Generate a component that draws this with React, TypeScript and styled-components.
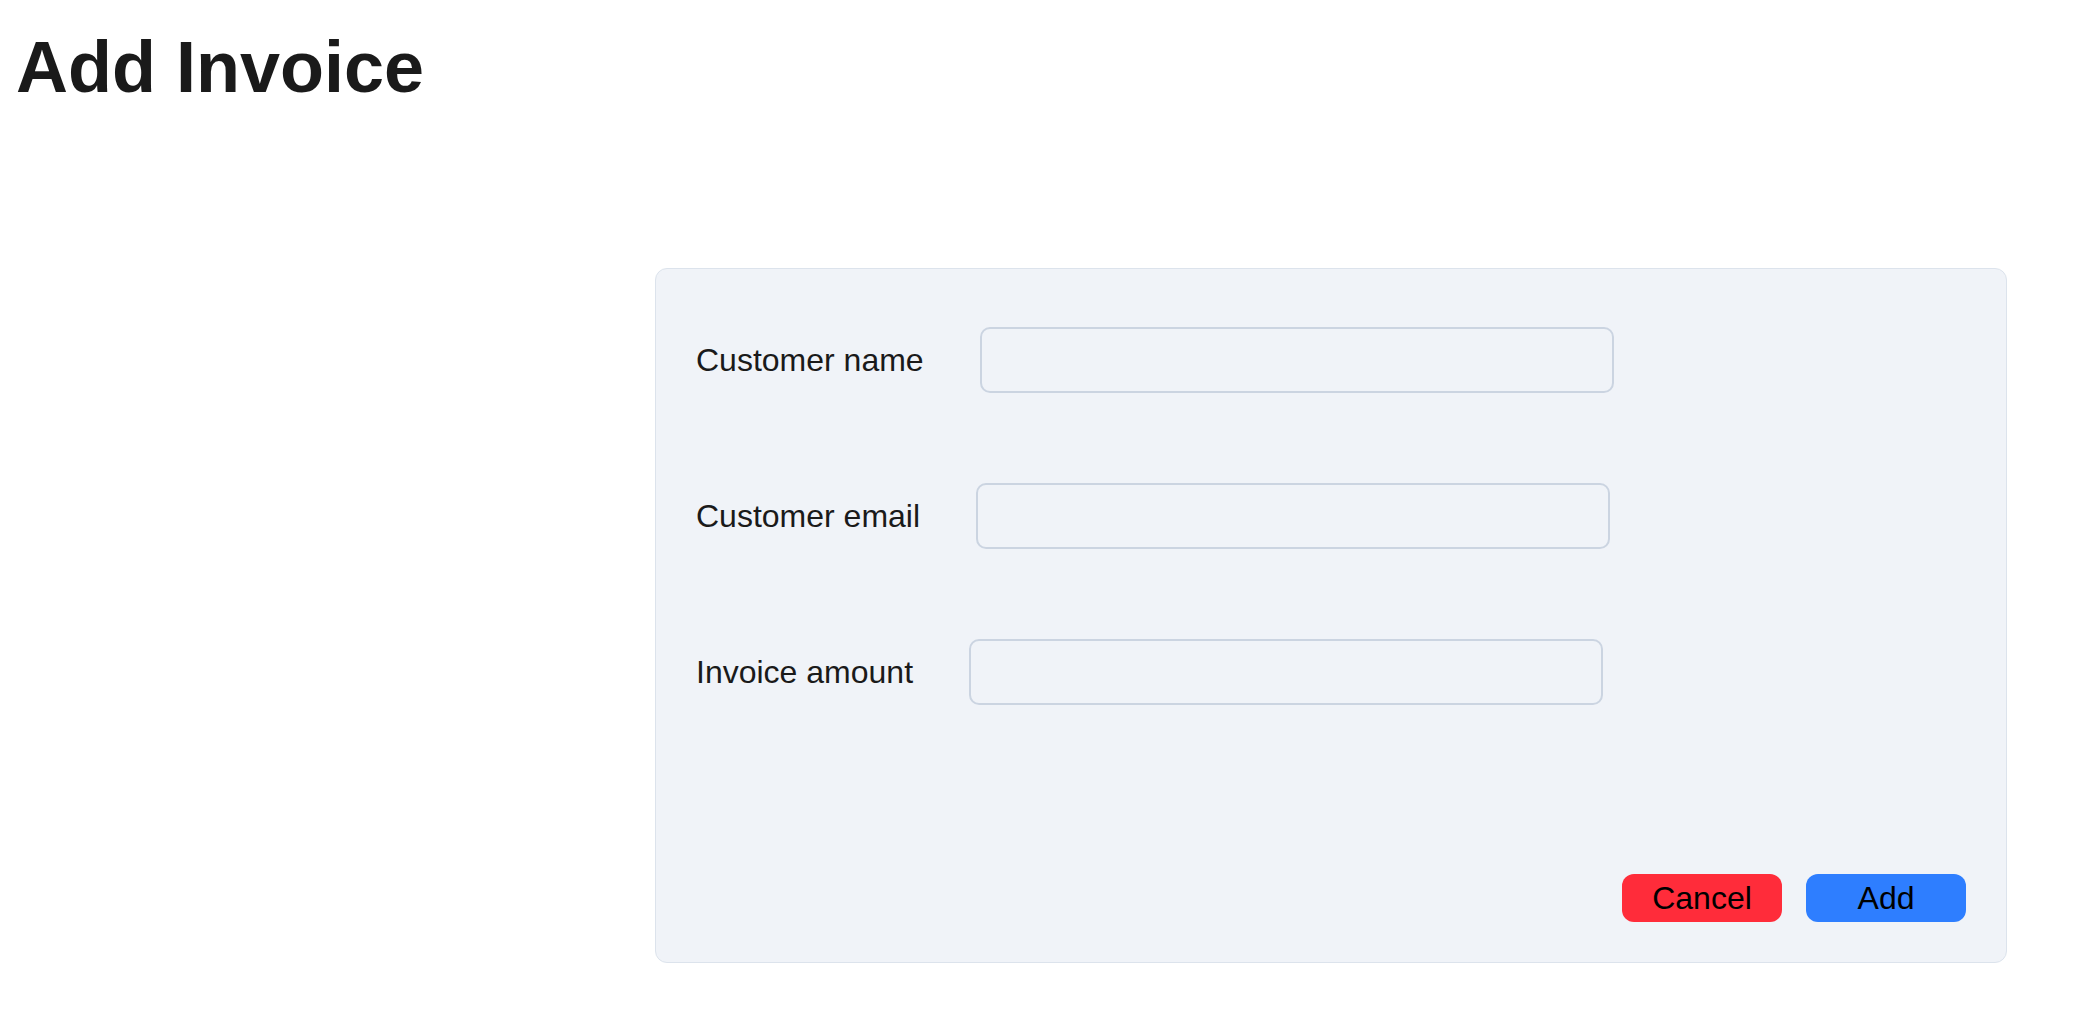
import React from "react";
import styled, { createGlobalStyle } from "styled-components";

const GlobalStyle = createGlobalStyle`
  html, body {
    margin: 0;
    padding: 0;
    background: #ffffff;
    font-family: "Liberation Sans", Arial, sans-serif;
    color: #1a1a1a;
  }
`;

const Page = styled.div`
  display: flex;
  flex-direction: column;
  padding: 26px 0 0 16px;
`;

const Title = styled.h1`
  margin: 0;
  font-size: 72px;
  font-weight: 700;
  line-height: 83px;
  color: #1a1a1a;
`;

const Card = styled.form`
  box-sizing: border-box;
  width: 1352px;
  height: 695px;
  margin: 159px 0 0 639px;
  padding: 58px 40px 40px 40px;
  background: #f0f3f8;
  border: 1px solid #dce3ec;
  border-radius: 12px;
  display: flex;
  flex-direction: column;
`;

const Fields = styled.div`
  display: flex;
  flex-direction: column;
  gap: 90px;
`;

const Row = styled.div`
  display: flex;
  align-items: center;
  height: 66px;
`;

const Label = styled.label`
  font-size: 32px;
  color: #1a1a1a;
  margin-right: 56px;
  white-space: nowrap;
`;

const Input = styled.input`
  box-sizing: border-box;
  width: 634px;
  height: 66px;
  background: transparent;
  border: 2px solid #cbd4e1;
  border-radius: 10px;
  font-family: inherit;
  font-size: 28px;
  padding: 0 14px;
  outline: none;
`;

const Actions = styled.div`
  margin-top: auto;
  display: flex;
  justify-content: flex-end;
  gap: 24px;
`;

const Button = styled.button<{ $tone: "danger" | "primary" }>`
  width: 160px;
  height: 48px;
  border: none;
  border-radius: 12px;
  background: ${(p) => (p.$tone === "danger" ? "#ff2c3a" : "#2e7eff")};
  color: #000000;
  font-family: "Liberation Sans", Arial, sans-serif;
  font-size: 32px;
  line-height: 48px;
  padding: 0;
  cursor: pointer;
`;

const fields = [
  { id: "name", label: "Customer name", type: "text" },
  { id: "email", label: "Customer email", type: "email" },
  { id: "amount", label: "Invoice amount", type: "text" },
];

export default function App() {
  return (
    <>
      <GlobalStyle />
      <Page>
        <Title>Add Invoice</Title>
        <Card onSubmit={(e) => e.preventDefault()}>
          <Fields>
            {fields.map((f) => (
              <Row key={f.id}>
                <Label htmlFor={f.id}>{f.label}</Label>
                <Input id={f.id} type={f.type} />
              </Row>
            ))}
          </Fields>
          <Actions>
            <Button type="button" $tone="danger">Cancel</Button>
            <Button type="submit" $tone="primary">Add</Button>
          </Actions>
        </Card>
      </Page>
    </>
  );
}
